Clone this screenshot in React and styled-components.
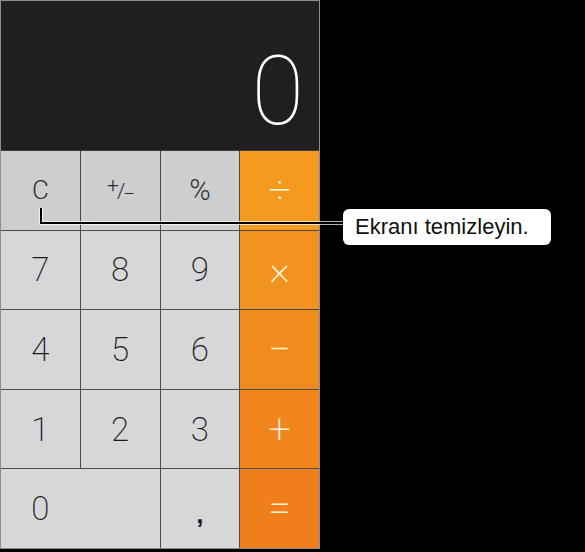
import styled, { createGlobalStyle } from "styled-components";

const GlobalStyle = createGlobalStyle`
  html, body {
    margin: 0;
    padding: 0;
    background: #000;
  }
  body {
    font-family: "Liberation Sans", Arial, sans-serif;
  }
`;

const Page = styled.div`
  position: relative;
  width: 585px;
  height: 552px;
  background: #000;
  display: flex;
  align-items: flex-start;
`;

const Calculator = styled.div`
  width: 318px;
  border: 1px solid #8d8d8d;
  background: #3c3c3c;
  display: flex;
  flex-direction: column;
  gap: 1px;
`;

const Display = styled.div`
  height: 149px;
  background: #1f1f1f;
  display: flex;
  align-items: flex-end;
  justify-content: flex-end;
  padding: 0 15px 11px 0;
  box-sizing: border-box;
  color: #fff;
  font-family: Roboto, "Liberation Sans", sans-serif;
  font-weight: 100;
  font-size: 96px;
  line-height: 1;
`;

const Keypad = styled.div`
  height: 397px;
  display: grid;
  grid-template-columns: repeat(4, 1fr);
  grid-template-rows: repeat(5, 1fr);
  gap: 1px;
  background: #4a4a4a;
`;

const Key = styled.button`
  border: none;
  padding: 0;
  margin: 0;
  display: flex;
  align-items: center;
  font-family: Roboto, "Liberation Sans", sans-serif;
  font-weight: 200;
  font-size: 33px;
  color: #1c1c1c;
  background: ${(p) => (p.$fn ? "#cdcecf" : "#d5d7d9")};
  grid-column: span ${(p) => p.$span || 1};
  justify-content: ${(p) => (p.$span ? "flex-start" : "center")};
`;

const OpKey = styled(Key)`
  background: ${(p) => p.$tone};
  color: #fff4dc;
  font-weight: 200;
  font-size: 40px;
`;

const SmallKey = styled(Key)`
  font-size: ${(p) => p.$size || 26}px;
  font-weight: 300;
  color: #333;
`;

const ZeroLabel = styled.span`
  width: calc((100% - 1px) / 2);
  text-align: center;
`;

const Comma = styled.span`
  font-family: "Liberation Sans", sans-serif;
  font-weight: 700;
  font-size: 26px;
  margin-top: 12px;
`;

const PlusMinus = styled.span`
  font-size: 21px;
  font-weight: 300;
  color: #2a2a2a;
  line-height: 1;
  letter-spacing: -2px;
`;

const Raised = styled.span`
  vertical-align: 6px;
`;

const Lowered = styled.span`
  vertical-align: -3px;
`;

const Leader = styled.svg`
  position: absolute;
  left: 0;
  top: 0;
  pointer-events: none;
`;

const Callout = styled.div`
  position: absolute;
  left: 343px;
  top: 209px;
  width: 208px;
  height: 36px;
  box-sizing: border-box;
  background: #fff;
  border-radius: 6px;
  color: #111;
  font-size: 22px;
  display: flex;
  align-items: center;
  padding-left: 12px;
`;

const orange = ["#f49a20", "#f3931f", "#f28b1e", "#f2851d", "#f07e1b"];

export default function App() {
  return (
    <>
      <GlobalStyle />
      <Page>
        <Calculator>
          <Display>0</Display>
          <Keypad>
            <SmallKey $fn>C</SmallKey>
            <Key $fn>
              <PlusMinus>
                <Raised>+</Raised>/<Lowered>−</Lowered>
              </PlusMinus>
            </Key>
            <SmallKey $fn $size={29}>%</SmallKey>
            <OpKey $tone={orange[0]}>÷</OpKey>

            <Key>7</Key>
            <Key>8</Key>
            <Key>9</Key>
            <OpKey $tone={orange[1]}>×</OpKey>

            <Key>4</Key>
            <Key>5</Key>
            <Key>6</Key>
            <OpKey $tone={orange[2]}>−</OpKey>

            <Key>1</Key>
            <Key>2</Key>
            <Key>3</Key>
            <OpKey $tone={orange[3]}>+</OpKey>

            <Key $span={2}>
              <ZeroLabel>0</ZeroLabel>
            </Key>
            <Key>
              <Comma>,</Comma>
            </Key>
            <OpKey $tone={orange[4]}>=</OpKey>
          </Keypad>
        </Calculator>

        <Leader width="585" height="552">
          <polyline
            points="41,208 41,223 344,223"
            fill="none"
            stroke="#fff"
            strokeWidth="4"
            opacity="0.7"
          />
          <polyline
            points="41,208 41,223 344,223"
            fill="none"
            stroke="#000"
            strokeWidth="2"
          />
        </Leader>
        <Callout>Ekranı temizleyin.</Callout>
      </Page>
    </>
  );
}
